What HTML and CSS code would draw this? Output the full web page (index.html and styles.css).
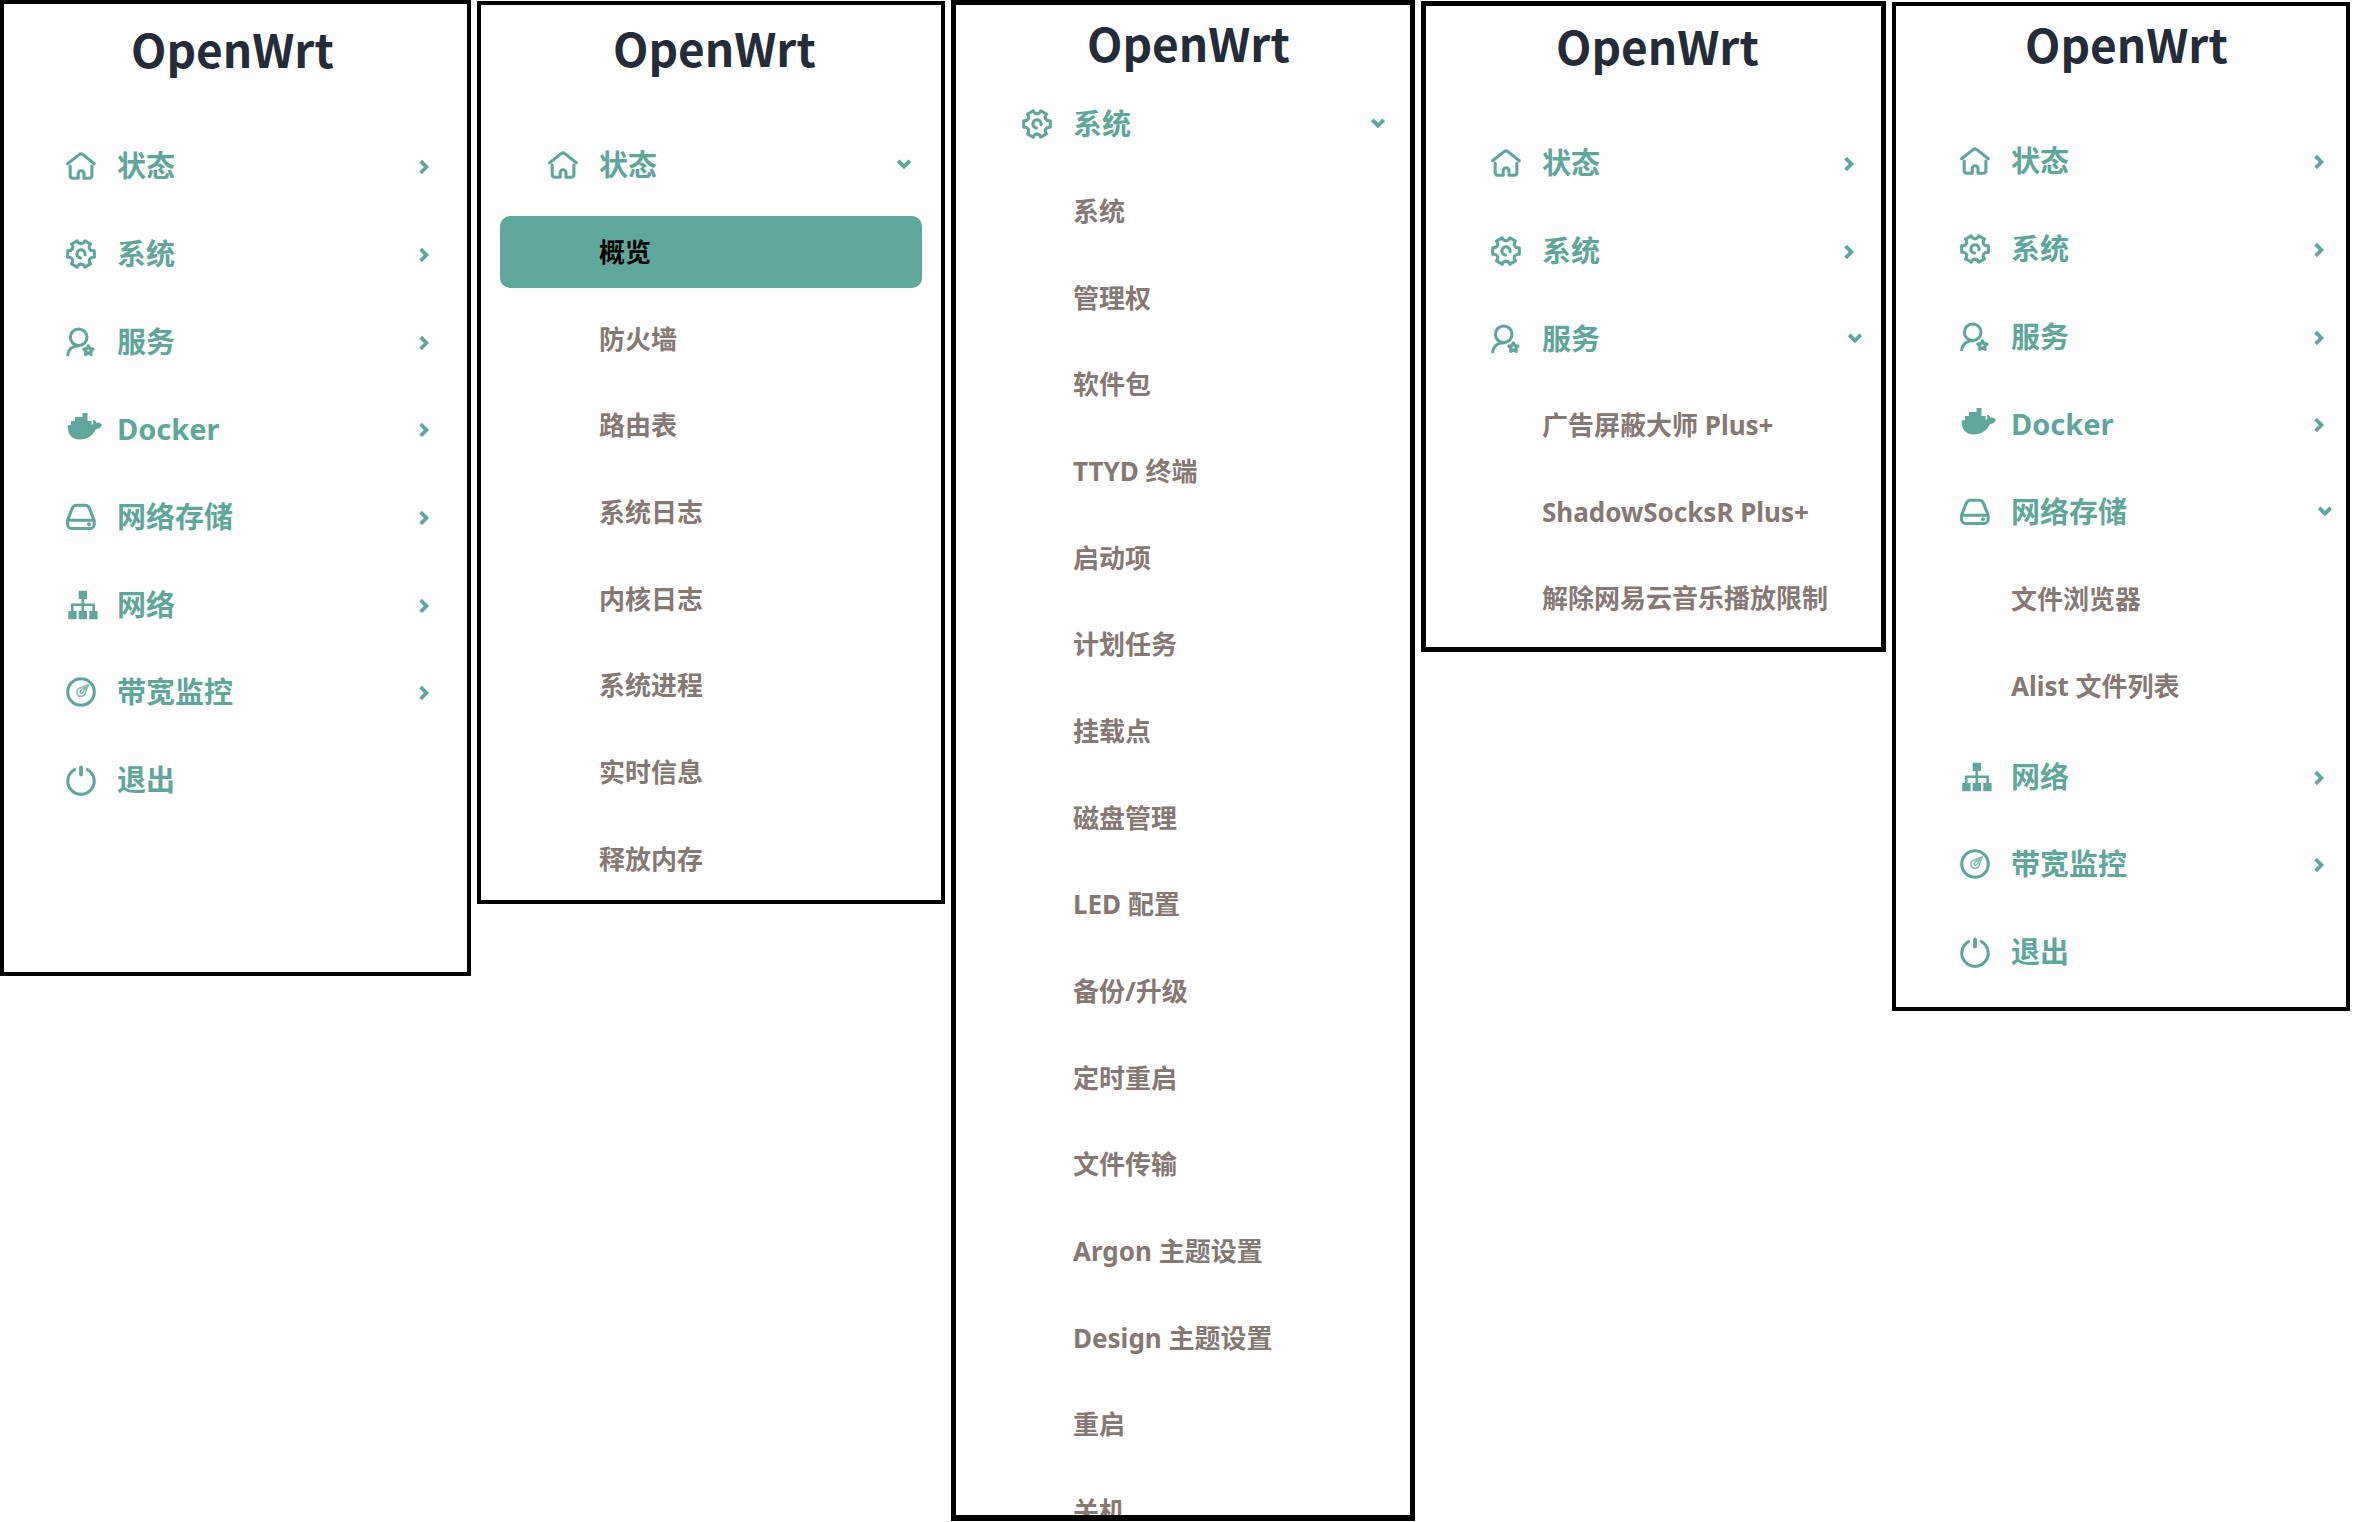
FILE: index.html
```
<!DOCTYPE html>
<html lang="zh-CN">
<head>
<meta charset="utf-8">
<meta name="viewport" content="width=device-width, initial-scale=1">
<title>OpenWrt</title>
<link rel="stylesheet" href="styles.css">
</head>
<body>
<svg class="sprite" aria-hidden="true">
  <symbol id="home" viewBox="0 0 30 30"><path d="M1.6 12.7L13.4 3.4Q15 2.2 16.6 3.4L28.3 12.7M4.2 15V24.6Q4.2 27.2 6.8 27.2H12.2V22.6A2.9 2.9 0 0 1 18 22.6V27.2H23.3Q25.9 27.2 25.9 24.6V15"/></symbol>
  <symbol id="gear" viewBox="0 0 30 30"><path d="M28.3 18.3V11.7Q25 12.2 23.7 9.9Q22.4 7.7 24.5 5.1L18.8 1.8Q17.6 4.9 15 4.9Q12.4 4.9 11.2 1.8L5.5 5.1Q7.6 7.7 6.3 9.9Q5 12.2 1.7 11.7V18.3Q5 17.8 6.3 20.1Q7.6 22.3 5.5 24.9L11.2 28.2Q12.4 25.1 15 25.1Q17.6 25.1 18.8 28.2L24.5 24.9Q22.4 22.3 23.7 20.1Q25 17.8 28.3 18.3Z"/><path d="M19 15.8A4.1 4.1 0 1 0 14.6 19"/></symbol>
  <symbol id="user" viewBox="0 0 30 30"><circle cx="12.7" cy="10.3" r="8.3"/><path d="M1.7 27.8C2.6 22.4 6.6 19 12.7 18.8"/><path d="M22.4 18.8L23.8 21.6 27 22.1 24.7 24.3 25.2 27.4 22.4 26 19.6 27.4 20.1 24.3 17.8 22.1 21 21.6Z"/></symbol>
  <symbol id="docker" viewBox="0 0 30 30"><path class="solid" d="M5 11V7H9V3H16.5V-1H21.5V7H25.5V11C27.5 10.5 28 8.5 27 6.5C27.5 5 29 5.5 30.5 9C32.5 8 34.5 9 36 11C34.5 14 32 15 30 15C27 21.5 21 25.5 14 25.5C5 25.5 1.7 20 1.7 11.5Z"/></symbol>
  <symbol id="drive" viewBox="0 0 30 30"><path d="M10.8 3.3H18.8C21.2 3.3 22.8 4.5 23.6 6.6L28.2 18.5V22.3A4.2 4.2 0 0 1 24 26.5H5.7A4.2 4.2 0 0 1 1.5 22.3V18.5L6.1 6.6C6.9 4.5 8.4 3.3 10.8 3.3ZM2 18.3H28"/><circle class="solid" cx="23" cy="22.2" r="2"/></symbol>
  <symbol id="network" viewBox="0 0 30 30"><path class="solid" d="M12.7 .7h8.3V9h-8.3zM2.3 21h8.3v8.3H2.3zM12.7 21h8.3v8.3h-8.3zM23.3 21h8.3v8.3h-8.3z"/><path class="thin" d="M16.8 8V22M6.2 21V14.8H27.6V21"/></symbol>
  <symbol id="gauge" viewBox="0 0 30 30"><circle cx="15" cy="15" r="13.3"/><path class="needle" d="M22.5 7.6L13.4 11.2C9.4 13.2 10.6 19.4 15 19.3C18.3 19.2 19.4 16.8 19.6 14.6ZM20 10L14.8 13.2C12.6 15.4 15.6 17.6 17.2 15.2Z"/></symbol>
  <symbol id="power" viewBox="0 0 30 30"><path d="M8.6 4.6A13.2 13.2 0 1 0 21.4 4.6"/><path class="thick" d="M15 2.4V9.4"/></symbol>
  <symbol id="right" viewBox="0 0 16 16"><path d="M4.6 3.2L10.4 9L4.6 14.8"/></symbol>
  <symbol id="down" viewBox="0 0 16 16"><path d="M2.2 3.8L8 9.6L13.8 3.8"/></symbol>
</svg>

<main class="board">
  <section class="panel panel--closed">
    <h1 class="brand">OpenWrt</h1>
    <nav aria-label="主菜单">
      <ul class="menu">
        <li><button class="row" type="button"><svg class="icon"><use href="#home"/></svg><span class="label">状态</span><svg class="chevron"><use href="#right"/></svg></button></li>
        <li><button class="row" type="button"><svg class="icon"><use href="#gear"/></svg><span class="label">系统</span><svg class="chevron"><use href="#right"/></svg></button></li>
        <li><button class="row" type="button"><svg class="icon"><use href="#user"/></svg><span class="label">服务</span><svg class="chevron"><use href="#right"/></svg></button></li>
        <li><button class="row" type="button"><svg class="icon"><use href="#docker"/></svg><span class="label">Docker</span><svg class="chevron"><use href="#right"/></svg></button></li>
        <li><button class="row" type="button"><svg class="icon"><use href="#drive"/></svg><span class="label">网络存储</span><svg class="chevron"><use href="#right"/></svg></button></li>
        <li><button class="row" type="button"><svg class="icon"><use href="#network"/></svg><span class="label">网络</span><svg class="chevron"><use href="#right"/></svg></button></li>
        <li><button class="row" type="button"><svg class="icon"><use href="#gauge"/></svg><span class="label">带宽监控</span><svg class="chevron"><use href="#right"/></svg></button></li>
        <li><a class="row" href="#logout"><svg class="icon"><use href="#power"/></svg><span class="label">退出</span></a></li>
      </ul>
    </nav>
  </section>

  <section class="panel panel--status">
    <h1 class="brand">OpenWrt</h1>
    <nav aria-label="状态菜单">
      <ul class="menu">
        <li>
          <button class="row" type="button" aria-expanded="true"><svg class="icon"><use href="#home"/></svg><span class="label">状态</span><svg class="chevron"><use href="#down"/></svg></button>
          <ul class="submenu">
            <li><a class="active" href="#overview" aria-current="page">概览</a></li>
            <li><a href="#firewall">防火墙</a></li>
            <li><a href="#routes">路由表</a></li>
            <li><a href="#syslog">系统日志</a></li>
            <li><a href="#dmesg">内核日志</a></li>
            <li><a href="#processes">系统进程</a></li>
            <li><a href="#realtime">实时信息</a></li>
            <li><a href="#freemem">释放内存</a></li>
          </ul>
        </li>
      </ul>
    </nav>
  </section>

  <section class="panel panel--system">
    <h1 class="brand">OpenWrt</h1>
    <nav aria-label="系统菜单">
      <ul class="menu">
        <li>
          <button class="row" type="button" aria-expanded="true"><svg class="icon"><use href="#gear"/></svg><span class="label">系统</span><svg class="chevron"><use href="#down"/></svg></button>
          <ul class="submenu">
            <li><a href="#system">系统</a></li>
            <li><a href="#admin">管理权</a></li>
            <li><a href="#packages">软件包</a></li>
            <li><a href="#ttyd">TTYD 终端</a></li>
            <li><a href="#startup">启动项</a></li>
            <li><a href="#cron">计划任务</a></li>
            <li><a href="#mounts">挂载点</a></li>
            <li><a href="#disks">磁盘管理</a></li>
            <li><a href="#leds">LED 配置</a></li>
            <li><a href="#flash">备份/升级</a></li>
            <li><a href="#autoreboot">定时重启</a></li>
            <li><a href="#transfer">文件传输</a></li>
            <li><a href="#argon">Argon 主题设置</a></li>
            <li><a href="#design">Design 主题设置</a></li>
            <li><a href="#reboot">重启</a></li>
            <li><a href="#poweroff">关机</a></li>
          </ul>
        </li>
      </ul>
    </nav>
  </section>

  <section class="panel panel--services">
    <h1 class="brand">OpenWrt</h1>
    <nav aria-label="服务菜单">
      <ul class="menu">
        <li><button class="row" type="button"><svg class="icon"><use href="#home"/></svg><span class="label">状态</span><svg class="chevron"><use href="#right"/></svg></button></li>
        <li><button class="row" type="button"><svg class="icon"><use href="#gear"/></svg><span class="label">系统</span><svg class="chevron"><use href="#right"/></svg></button></li>
        <li>
          <button class="row" type="button" aria-expanded="true"><svg class="icon"><use href="#user"/></svg><span class="label">服务</span><svg class="chevron"><use href="#down"/></svg></button>
          <ul class="submenu">
            <li><a href="#adbyby">广告屏蔽大师 Plus+</a></li>
            <li><a href="#ssr">ShadowSocksR Plus+</a></li>
            <li><a href="#music">解除网易云音乐播放限制</a></li>
          </ul>
        </li>
      </ul>
    </nav>
  </section>

  <section class="panel panel--storage">
    <h1 class="brand">OpenWrt</h1>
    <nav aria-label="网络存储菜单">
      <ul class="menu">
        <li><button class="row" type="button"><svg class="icon"><use href="#home"/></svg><span class="label">状态</span><svg class="chevron"><use href="#right"/></svg></button></li>
        <li><button class="row" type="button"><svg class="icon"><use href="#gear"/></svg><span class="label">系统</span><svg class="chevron"><use href="#right"/></svg></button></li>
        <li><button class="row" type="button"><svg class="icon"><use href="#user"/></svg><span class="label">服务</span><svg class="chevron"><use href="#right"/></svg></button></li>
        <li><button class="row" type="button"><svg class="icon"><use href="#docker"/></svg><span class="label">Docker</span><svg class="chevron"><use href="#right"/></svg></button></li>
        <li>
          <button class="row" type="button" aria-expanded="true"><svg class="icon"><use href="#drive"/></svg><span class="label">网络存储</span><svg class="chevron"><use href="#down"/></svg></button>
          <ul class="submenu">
            <li><a href="#browser">文件浏览器</a></li>
            <li><a href="#alist">Alist 文件列表</a></li>
          </ul>
        </li>
        <li><button class="row" type="button"><svg class="icon"><use href="#network"/></svg><span class="label">网络</span><svg class="chevron"><use href="#right"/></svg></button></li>
        <li><button class="row" type="button"><svg class="icon"><use href="#gauge"/></svg><span class="label">带宽监控</span><svg class="chevron"><use href="#right"/></svg></button></li>
        <li><a class="row" href="#logout"><svg class="icon"><use href="#power"/></svg><span class="label">退出</span></a></li>
      </ul>
    </nav>
  </section>
</main>
</body>
</html>
```
FILE: styles.css
```
:root {
  --accent: #5fa69b;
  --muted: #867873;
  --ink: #232c38;
}

* {
  box-sizing: border-box;
}

body {
  margin: 0;
  background: #fff;
  font-family: "Noto Sans", "Noto Sans CJK SC", sans-serif;
  font-weight: 700;
}

ul {
  margin: 0;
  padding: 0;
  list-style: none;
}

.sprite {
  display: none;
}

.board {
  display: grid;
  grid-template-columns: 471fr 468fr 464fr 465fr 458fr;
  align-items: start;
  gap: 6px;
  padding-right: 3px;
}

/* Sidebar panels */
.panel {
  --indent: 64px;
  --end: 35px;
  min-width: 0;
  overflow: hidden;
  border: 4px solid #000;
  background: #fefefe;
}

.panel--closed {
  --indent: 62px;
  padding: 14px 0 148px;
}

.panel--status {
  --indent: 67px;
  margin-top: 1px;
  padding-top: 12px;
}

.panel--status .menu {
  margin-bottom: -6px;
}

.panel--system {
  --indent: 66px;
  --end: 30px;
  max-height: calc(100vh - 1px);
  padding-top: 7px;
  border-width: 5px 5px 6px;
}

.panel--system .brand {
  margin-bottom: 8px;
}

.panel--services {
  --indent: 65px;
  --end: 24px;
  margin-top: 1px;
  padding: 9px 0 2px;
  border-width: 5px;
}

.panel--storage {
  --end: 19px;
  margin-top: 2px;
  padding: 7px 0 11px;
}

.brand {
  margin: 0 0 44px;
  padding-left: calc(var(--indent) + 65px);
  color: var(--ink);
  font-family: "Noto Sans CJK SC", sans-serif;
  font-size: 46px;
  font-weight: 700;
  line-height: 60px;
}

/* Top-level entries */
.row {
  display: flex;
  align-items: center;
  width: 100%;
  height: 88px;
  padding: 0 var(--end) 0 var(--indent);
  border: 0;
  background: none;
  color: var(--accent);
  font: inherit;
  font-size: 29px;
  line-height: 40px;
  text-align: left;
  text-decoration: none;
  cursor: pointer;
}

.menu > li:nth-child(3n) > .row {
  height: 87px;
}

.icon {
  flex: none;
  width: 30px;
  height: 30px;
  overflow: visible;
  fill: none;
  stroke: currentColor;
  stroke-width: 3.1;
  stroke-linecap: round;
  stroke-linejoin: round;
}

symbol {
  overflow: visible;
}

.solid {
  fill: currentColor;
  stroke: none;
}

.thin {
  stroke-width: 2.6;
  stroke-linecap: butt;
  stroke-linejoin: miter;
}

.thick {
  stroke-width: 3.8;
}

.needle {
  stroke-width: 1.5;
  opacity: .75;
}

.label {
  flex: 1;
  margin-left: 21px;
}

.chevron {
  flex: none;
  width: 16px;
  height: 16px;
  fill: none;
  stroke: currentColor;
  stroke-width: 3.8;
}

.row[aria-expanded="true"] .chevron {
  margin-right: -6px;
}

/* Nested entries */
.submenu {
  display: grid;
  grid-auto-rows: 87px 87px 86px;
  align-items: center;
  margin-top: -1px;
  padding-bottom: 4px;
}

.submenu a {
  display: block;
  margin: 0 19px;
  padding: 16px 0 16px calc(var(--indent) + 32px);
  border-radius: 10px;
  color: var(--muted);
  font-size: 26px;
  line-height: 40px;
  text-decoration: none;
  white-space: nowrap;
}

.submenu .active {
  background: var(--accent);
  color: #000;
}
```
